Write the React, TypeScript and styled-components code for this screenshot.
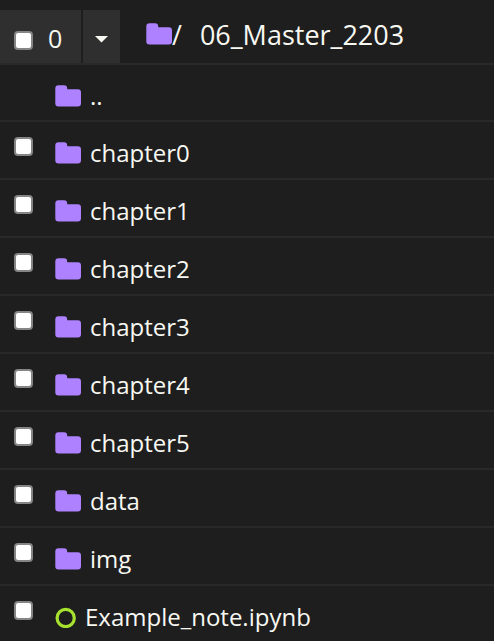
import React from "react";
import styled, { createGlobalStyle } from "styled-components";

const GlobalStyle = createGlobalStyle`
  * { box-sizing: border-box; }
  body {
    margin: 0;
    background: #1e1e1e;
    color: #f8f8f2;
    font-family: "Segoe UI", "Open Sans", "Noto Sans", sans-serif;
    font-size: 24px;
    line-height: 32px;
  }
`;

const Browser = styled.main`
  overflow: hidden;
`;

const Header = styled.header`
  display: flex;
  align-items: stretch;
  padding-top: 10px;
  border-bottom: 2px solid #292929;
`;

const SelectAll = styled.label`
  display: flex;
  align-items: flex-end;
  gap: 15px;
  width: 81px;
  height: 53px;
  padding: 0 0 13px 14px;
  margin-right: 2px;
  background: #2f2f2f;
`;

const Count = styled.span`
  font-size: 25px;
  line-height: 24px;
`;

const MenuButton = styled.button`
  display: flex;
  align-items: center;
  justify-content: center;
  width: 37px;
  padding: 6px 0 0;
  border: 0;
  background: #2f2f2f;
  color: #f8f8f2;
`;

const Breadcrumb = styled.nav`
  display: flex;
  align-items: center;
  padding: 0 0 4px 26px;
  font-size: 27px;
`;

const Crumb = styled.a`
  display: flex;
  align-items: center;
  padding-bottom: 1px;
  color: inherit;
  text-decoration: none;
`;

const CurrentCrumb = styled(Crumb)`
  margin-left: 18px;
  padding-bottom: 0;
`;

const Checkbox = styled.input`
  appearance: none;
  flex: none;
  width: 19px;
  height: 19px;
  margin: 0;
  border: 2px solid #858585;
  border-radius: 4px;
  background: #ffffff;
  &:checked { background: #ad81ff; }
`;

const List = styled.ul`
  margin: 0;
  padding: 0;
  list-style: none;
`;

const Row = styled.li<{ $parent?: boolean }>`
  display: flex;
  align-items: flex-start;
  height: ${(p) => (p.$parent ? 57 : 58)}px;
  padding: 15px 14px 0;
  border-bottom: 2px solid #292929;
`;

const CheckCell = styled.div`
  display: flex;
  width: 41px;
`;

const Entry = styled.a`
  display: flex;
  align-items: center;
  gap: 9px;
  color: inherit;
  text-decoration: none;
`;

const FolderIcon = () => (
  <svg width="26" height="22" viewBox="0 0 26 22" aria-hidden="true">
    <path
      d="M0.300 3.500Q0.300 0.300 3.500 0.300H9Q12.200 0.300 12.200 3.500V4.200H22.800Q26 4.200 26 7.400V18.300Q26 21.500 22.800 21.500H3.500Q0.300 21.500 0.300 18.300Z"
      fill="#ad81ff"
    />
  </svg>
);

const NotebookIcon = () => (
  <svg width="21" height="22" viewBox="0 0 21 22" aria-hidden="true">
    <circle cx="10.700" cy="12" r="8.600" fill="none" stroke="#a6e22e" strokeWidth="3.200" />
  </svg>
);

const CaretIcon = () => (
  <svg width="13" height="7" viewBox="0 0 13 7" aria-hidden="true">
    <path d="M0 0H13L6.500 6.500Z" fill="currentColor" />
  </svg>
);

const entries = [
  "..",
  "chapter0",
  "chapter1",
  "chapter2",
  "chapter3",
  "chapter4",
  "chapter5",
  "data",
  "img",
  "Example_note.ipynb",
];

export default function App() {
  return (
    <Browser>
      <GlobalStyle />
      <Header>
        <SelectAll>
          <Checkbox type="checkbox" />
          <Count>0</Count>
        </SelectAll>
        <MenuButton type="button" aria-label="Select by type">
          <CaretIcon />
        </MenuButton>
        <Breadcrumb>
          <Crumb href="#root" aria-label="Root folder">
            <FolderIcon />
          </Crumb>
          <span>/</span>
          <CurrentCrumb href="#current">06_Master_2203</CurrentCrumb>
        </Breadcrumb>
      </Header>
      <List>
        {entries.map((name) => {
          const parent = name === "..";
          const notebook = name.endsWith(".ipynb");
          return (
            <Row key={name} $parent={parent}>
              <CheckCell>
                {!parent && <Checkbox type="checkbox" aria-label={name} />}
              </CheckCell>
              <Entry href={"#" + name}>
                {notebook ? <NotebookIcon /> : <FolderIcon />}
                <span>{name}</span>
              </Entry>
            </Row>
          );
        })}
      </List>
    </Browser>
  );
}
